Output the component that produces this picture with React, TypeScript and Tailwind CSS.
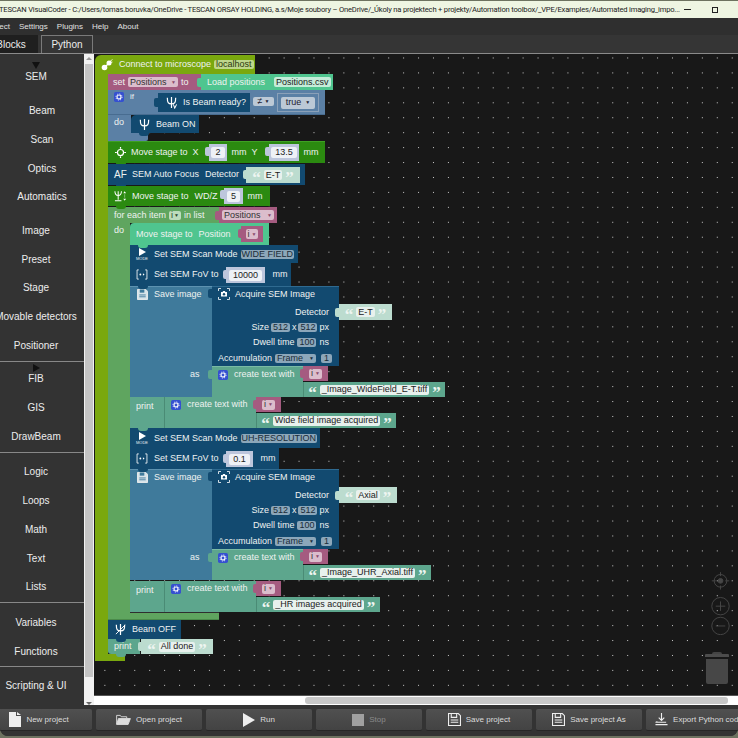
import React from "react";

const Blk = ({ className = "", children }: { className?: string; children?: React.ReactNode }) => (
  <div className={"absolute flex items-center whitespace-nowrap text-[9px] leading-none text-[#eef2f0] " + className}>{children}</div>
);

const Tab = ({ className = "" }: { className?: string }) => <div className={"absolute h-[9px] w-[4px] rounded-l-[2px] " + className} />;
const Notch = ({ className = "" }: { className?: string }) => <div className={"absolute h-[3px] w-[10px] rounded-b-[3px] " + className} />;

const Gear = () => (
  <svg viewBox="0 0 12 12" className="h-[10px] w-[10px] shrink-0">
    <rect width="12" height="12" rx="2" fill="#3550d0" />
    <circle cx="6" cy="6" r="2.4" fill="none" stroke="#fff" strokeWidth="1.3" />
    <circle cx="6" cy="6" r="3.7" fill="none" stroke="#fff" strokeWidth="1" strokeDasharray="1.4 1.5" />
  </svg>
);
const Floppy = ({ className = "h-[11px] w-[11px]", solid = true }: { className?: string; solid?: boolean }) => (
  <svg viewBox="0 0 12 12" className={className + " shrink-0"}>
    <path d="M.5 .5h9l2 2v9H.5z" fill={solid ? "#d8e4ea" : "none"} stroke="#eee" strokeWidth="1" />
    <path d="M3 .5h5v3.500H3z" fill={solid ? "#3f7a9b" : "none"} stroke={solid ? "none" : "#eee"} />
    <path d="M2.500 6.500h7M2.500 8.500h7" stroke={solid ? "#3f7a9b" : "#eee"} strokeWidth="1" />
  </svg>
);
const Camera = () => (
  <svg viewBox="0 0 12 12" className="h-[12px] w-[12px] shrink-0" fill="none" stroke="#fff" strokeWidth="0.8">
    <path d="M.5 3V.5H3M9 .5h2.5V3M.5 9v2.5H3M9 11.5h2.500V9" />
    <path d="M3 4h1.500l.7-1h1.600l.7 1H9v4.500H3z" fill="#fff" stroke="none" />
    <circle cx="6" cy="6.200" r="1.200" fill="#124a70" stroke="none" />
  </svg>
);
const ModeIcon = () => (
  <div className="flex w-[12px] shrink-0 flex-col items-center">
    <svg viewBox="0 0 8 8" className="h-[8px] w-[8px]"><path d="M1 0l7 4-7 4z" fill="#fff" /></svg>
    <span className="text-[4px] leading-[5px]">MODE</span>
  </div>
);
const FovIcon = () => (
  <svg viewBox="0 0 12 12" className="h-[11px] w-[12px] shrink-0" fill="none" stroke="#fff" strokeWidth="0.9">
    <path d="M2.500 1H.6v10h1.900M9.500 1h1.900v10H9.500" />
    <circle cx="4.200" cy="6" r="1" fill="#fff" stroke="none" />
    <path d="M7 4.700L8.800 6 7 7.300z" fill="#fff" stroke="none" />
  </svg>
);
const Psi = ({ mark }: { mark?: "off" | "ready" }) => (
  <svg viewBox="0 0 14 14" className="h-[13px] w-[13px] shrink-0" fill="none" stroke="#fff" strokeWidth="1.300">
    <path d="M2.500 2c0 5 1 6.500 4.500 6.500S11.500 7 11.500 2M7 1v12" />
    {mark === "off" && <path d="M2 12L12 2" strokeWidth="1" />}
    {mark === "ready" && <path d="M9 9l1.500 4 2-4" strokeWidth="1.100" />}
  </svg>
);
const WdIcon = () => (
  <svg viewBox="0 0 14 12" className="h-[12px] w-[13px] shrink-0" fill="none" stroke="#fff">
    <path d="M1 1c0 3.500 1 4.500 3.500 4.500S8 4.500 8 1M4.500 1v9M1 11h7" strokeWidth="1.100" />
    <path d="M11.500 1l-1.500 2h3zM11.500 11L10 9h3z" fill="#fff" stroke="none" />
    <path d="M11.500 4.500v1M11.500 6.500v1" strokeWidth="0.8" />
  </svg>
);

const Pill = ({ className = "bg-[#8ca7ba] text-[#1b2c38]", children }: { className?: string; children: React.ReactNode }) => (
  <span className={"inline-flex h-[9px] items-center rounded-[2px] px-[2px] text-[9px] leading-none " + className}>{children}</span>
);

const Num = ({ className, v }: { className: string; v: string }) => (
  <Blk className={"justify-center bg-[#bdc6dc] " + className}>
    <span className="flex h-[11px] items-center rounded-[2px] bg-[#eef1f6] px-[4px] text-[#222]">{v}</span>
  </Blk>
);

const Str = ({ className, v }: { className: string; v: string }) => (
  <div className={"absolute flex items-center justify-center gap-[3px] whitespace-nowrap text-[9px] leading-none " + className}>
    <span className="mt-[6px] font-['Liberation_Serif',serif] text-[17px] font-bold leading-[10px] text-[#eef5f1]">“</span>
    <span className="flex h-[10px] items-center rounded-[2px] bg-[#e8f1ed] px-[2px] text-[#222]">{v}</span>
    <span className="mt-[6px] font-['Liberation_Serif',serif] text-[17px] font-bold leading-[10px] text-[#eef5f1]">”</span>
  </div>
);

const VarI = ({ className }: { className: string }) => (
  <Blk className={"justify-center bg-[#a55b80] " + className}>
    <Tab className="left-[-3px] top-[3px] bg-[#a55b80]" />
    <span className="flex h-[10px] items-center gap-[2px] rounded-[2px] bg-[#dbbdcc] px-[2px] text-[#333]">i <span className="text-[5px] text-[#8a4a6a]">▼</span></span>
  </Blk>
);

const SaveGroup = ({ className, detector, detW, file, fileW }: { className: string; detector: string; detW: string; file: string; fileW: string }) => (
  <div className={"absolute " + className}>
    <Blk className="left-0 top-0 h-[111px] w-[82px] items-start border-t border-[#5d92b0] bg-[#3f7a9b] pl-[7px] pt-[2px]">
      <Floppy />
      <span className="ml-[6px] mt-[1px]">Save image</span>
    </Blk>
    <Blk className="left-[82px] top-0 h-[80px] w-[127px] items-start border-t border-[#2f6a90] bg-[#124a70]">
      <div className="ml-[6px] mt-[1px] flex items-center gap-[5px]"><Camera /><span>Acquire SEM Image</span></div>
    </Blk>
    <Tab className="left-[78px] top-[3px] bg-[#124a70]" />
    <Notch className="left-[8px] top-0 bg-[#124a70]" />
    <Blk className="left-[82px] top-[20px] h-[12px] w-[117px] justify-end">Detector</Blk>
    <Blk className="left-[82px] top-[36px] h-[11px] w-[117px] justify-end gap-[2px]">Size <Pill>512</Pill> x <Pill>512</Pill> px</Blk>
    <Blk className="left-[82px] top-[51px] h-[11px] w-[117px] justify-end gap-[3px]">Dwell time <Pill>100</Pill> ns</Blk>
    <Blk className="left-[88px] top-[67px] h-[11px] gap-[3px]">Accumulation <Pill className="w-[41px] justify-between bg-[#8ca7ba] text-[#1b2c38]">Frame <span className="text-[5px]">▼</span></Pill><Pill className="ml-[2px] bg-[#8ca7ba] px-[3px] text-[#1b2c38]">1</Pill></Blk>

    <Tab className="left-[205px] top-[22px] bg-[#bcdccf]" />
    <Str className={"left-[209px] top-[18px] h-[16px] bg-[#bcdccf] " + detW} v={detector} />

    <Blk className="left-[82px] top-[80px] h-[31px] w-[91px] items-start border-t border-[#7abba5] bg-[#5da68d] pl-[6px] pt-[3px]">
      <Gear />
      <span className="ml-[6px]">create text with</span>
    </Blk>
    <Blk className="left-[60px] top-[83px] h-[10px] w-[10px]">as</Blk>
    <Tab className="left-[78px] top-[84px] bg-[#5da68d]" />
    <VarI className="left-[173px] top-[80px] h-[15px] w-[25px]" />
    <Str className={"left-[173px] top-[96px] h-[15px] border-l border-[#4a8b75] bg-[#5da68d] " + fileW} v={file} />
  </div>
);

const PrintGroup = ({ className, text, w }: { className: string; text: string; w: string }) => (
  <div className={"absolute " + className}>
    <Blk className="left-0 top-0 h-[31px] w-[35px] items-start border-r border-[#4a8b75] bg-[#5da68d] pl-[6px] pt-[5px]">print</Blk>
    <Blk className="left-[35px] top-0 h-[31px] w-[91px] items-start bg-[#5da68d] pl-[6px] pt-[3px]">
      <Gear />
      <span className="ml-[6px]">create text with</span>
    </Blk>
    <VarI className="left-[126px] top-0 h-[15px] w-[25px]" />
    <Str className={"left-[126px] top-[16px] h-[15px] border-l border-[#4a8b75] bg-[#5da68d] " + w} v={text} />
  </div>
);

const Blocks = () => (
  <div className="absolute left-[-94px] top-[-54px] h-[738px] w-[738px]">
    {/* Connect hat */}
    <div className="absolute left-[95px] top-[72px] h-[589px] w-[13px] bg-[#7aa80e]" />
    <div className="absolute left-[95px] top-[654px] h-[7px] w-[30px] bg-[#7aa80e]" />
    <Blk className="left-[95px] top-[55px] h-[19px] w-[160px] rounded-tl-[6px] bg-[#7aa80e] pl-[6px]">
      <svg viewBox="0 0 12 12" className="h-[12px] w-[12px] shrink-0"><circle cx="3.500" cy="8.500" r="2.800" fill="#fff" /><circle cx="8" cy="4" r="2.500" fill="#fff" /><path d="M3 9l7-7" stroke="#fff" strokeWidth="1.200" /><path d="M9.500 2l2-1.500M10 3.500l1.500-.5" stroke="#fff" strokeWidth="0.800" /></svg>
      <span className="ml-[6px]">Connect to microscope</span>
      <span className="ml-[3px] flex h-[9px] items-center rounded-[2px] bg-[#bfd68c] px-[2px] text-[#2c3a0c]">localhost</span>
    </Blk>

    {/* set Positions */}
    <Blk className="left-[108px] top-[74px] h-[16px] w-[93px] bg-[#a55b80] pl-[5px]">
      set
      <span className="ml-[3px] flex h-[10px] w-[50px] items-center justify-between rounded-[2px] bg-[#dbbdcc] px-[2px] text-[#333]">Positions <span className="text-[5px] text-[#8a4a6a]">▼</span></span>
      <span className="ml-[3px]">to</span>
    </Blk>
    <Tab className="left-[197px] top-[78px] bg-[#4fc58f]" />
    <Blk className="left-[201px] top-[74px] h-[16px] w-[132px] bg-[#4fc58f] pl-[6px]">
      Load positions
      <span className="ml-[9px] flex h-[10px] items-center rounded-[2px] bg-[#c5ecd9] px-[2px] text-[#222]">Positions.csv</span>
    </Blk>

    {/* if */}
    <Blk className="left-[108px] top-[90px] h-[25px] w-[217px] items-start border-b border-[#486c90] bg-[#5b80a5] pl-[6px] pt-[2px]">
      <Gear />
      <span className="ml-[6px] mt-[1px] text-[8px]">if</span>
    </Blk>
    <div className="absolute left-[108px] top-[115px] h-[26px] w-[23px] bg-[#5b80a5]" />
    <div className="absolute left-[108px] top-[133px] h-[8px] w-[40px] rounded-br-[2px] bg-[#5b80a5]" />
    <Blk className="left-[114px] top-[117px] h-[10px]">do</Blk>
    <Tab className="left-[154px] top-[98px] bg-[#124a70]" />
    <Blk className="left-[158px] top-[93px] h-[19px] w-[92px] bg-[#124a70] pl-[7px]">
      <Psi mark="ready" />
      <span className="ml-[5px]">Is Beam ready?</span>
    </Blk>
    <div className="absolute left-[253px] top-[97px] flex h-[9px] w-[21px] items-center justify-center gap-[2px] rounded-[2px] bg-[#bcc9d6] text-[9px] leading-none text-[#223]">≠ <span className="text-[5px]">▼</span></div>
    <div className="absolute left-[277px] top-[93px] flex h-[19px] w-[42px] items-center justify-center whitespace-nowrap border border-[#8aa0b8] bg-[#5b80a5]">
      <span className="flex h-[12px] w-[34px] items-center justify-center rounded-[2px] bg-[#bcc9d6] text-[9px] leading-none text-[#223]">true <span className="ml-[4px] text-[5px]">▼</span></span>
    </div>
    <Blk className="left-[131px] top-[115px] h-[18px] w-[68px] rounded-tl-[5px] bg-[#124a70] pl-[7px]">
      <Psi />
      <span className="ml-[5px]">Beam ON</span>
    </Blk>
    <Notch className="left-[139px] top-[133px] bg-[#124a70]" />

    {/* Move stage XY */}
    <Blk className="left-[108px] top-[141px] h-[22px] w-[217px] border-t border-[#3fa024] bg-[#2b8a10] pl-[7px]">
      <svg viewBox="0 0 12 12" className="h-[11px] w-[11px] shrink-0" fill="none" stroke="#fff" strokeWidth="1.300"><circle cx="6" cy="6" r="3.300" /><path d="M6 0v2M6 10v2M0 6h2M10 6h2" /></svg>
      <span className="ml-[5px]">Move stage to</span>
      <span className="ml-[5px]">X</span>
      <span className="ml-[33px]">mm</span>
      <span className="ml-[5px]">Y</span>
      <span className="ml-[46px]">mm</span>
    </Blk>
    <Tab className="left-[205px] top-[147px] bg-[#bdc6dc]" />
    <Num className="left-[209px] top-[144px] h-[17px] w-[18px]" v="2" />
    <Tab className="left-[265px] top-[147px] bg-[#bdc6dc]" />
    <Num className="left-[269px] top-[144px] h-[17px] w-[30px]" v="13.5" />
    <Notch className="left-[116px] top-[163px] bg-[#2b8a10]" />

    {/* AF */}
    <Blk className="left-[108px] top-[164px] h-[21px] w-[197px] bg-[#124a70] pl-[6px]">
      <span className="w-[13px] text-[10px]">AF</span>
      <span className="ml-[5px]">SEM Auto Focus</span>
      <span className="ml-[6px]">Detector</span>
    </Blk>
    <Tab className="left-[243px] top-[170px] bg-[#bcdccf]" />
    <Str className="left-[246px] top-[167px] h-[16px] w-[54px] bg-[#bcdccf]" v="E-T" />
    <Notch className="left-[116px] top-[185px] bg-[#124a70]" />

    {/* WD/Z */}
    <Blk className="left-[108px] top-[186px] h-[20px] w-[162px] bg-[#2b8a10] pl-[6px]">
      <WdIcon />
      <span className="ml-[5px]">Move stage to</span>
      <span className="ml-[6px]">WD/Z</span>
      <span className="ml-[30px]">mm</span>
    </Blk>
    <Tab className="left-[220px] top-[190px] bg-[#bdc6dc]" />
    <Num className="left-[224px] top-[188px] h-[16px] w-[19px]" v="5" />

    {/* for each */}
    <Blk className="left-[108px] top-[207px] h-[16px] w-[111px] bg-[#5fa55f] pl-[6px]">
      for each item
      <span className="mx-[3px] flex h-[9px] items-center gap-[1px] rounded-[2px] bg-[#bcdcbc] px-[2px] text-[#2b4a2b]">i <span className="text-[5px]">▼</span></span>
      in list
    </Blk>
    <Notch className="left-[116px] top-[206px] bg-[#2b8a10]" />
    <div className="absolute left-[108px] top-[223px] h-[397px] w-[22px] bg-[#5fa55f]" />
    <div className="absolute left-[108px] top-[613px] h-[7px] w-[111px] border-b border-[#4a8a4a] bg-[#5fa55f]" />
    <Blk className="left-[114px] top-[226px] h-[8px]">do</Blk>
    <Tab className="left-[215px] top-[211px] bg-[#a55b80]" />
    <Blk className="left-[219px] top-[207px] h-[16px] w-[58px] justify-center bg-[#a55b80]">
      <span className="flex h-[10px] w-[52px] items-center justify-between rounded-[2px] bg-[#dbbdcc] px-[2px] text-[#333]">Positions <span className="text-[5px] text-[#8a4a6a]">▼</span></span>
    </Blk>

    {/* Move stage to Position */}
    <Blk className="left-[130px] top-[223px] h-[22px] w-[139px] rounded-tl-[4px] bg-[#4fc58f] pl-[6px]">
      Move stage to
      <span className="ml-[6px]">Position</span>
    </Blk>
    <VarI className="left-[241px] top-[226px] h-[16px] w-[22px]" />

    {/* Wide field */}
    <Blk className="left-[130px] top-[245px] h-[18px] w-[168px] bg-[#124a70] pl-[6px]">
      <ModeIcon />
      <span className="ml-[6px]">Set SEM Scan Mode</span>
      <span className="ml-[3px] flex h-[9px] items-center rounded-[2px] bg-[#8ca7ba] px-[1px] text-[#1b2c38]">WIDE FIELD</span>
    </Blk>
    <Notch className="left-[138px] top-[245px] bg-[#4fc58f]" />
    <Blk className="left-[130px] top-[263px] h-[23px] w-[161px] bg-[#124a70] pl-[6px]">
      <FovIcon />
      <span className="ml-[6px]">Set SEM FoV to</span>
      <span className="ml-[54px]">mm</span>
    </Blk>
    <Tab className="left-[223px] top-[270px] bg-[#bdc6dc]" />
    <Num className="left-[226px] top-[267px] h-[16px] w-[39px]" v="10000" />

    <SaveGroup className="left-[130px] top-[286px]" detector="E-T" detW="w-[53px]" file="_Image_WideField_E-T.tiff" fileW="w-[142px]" />
    <PrintGroup className="left-[130px] top-[397px]" text="Wide field image acquired" w="w-[140px]" />

    {/* UH */}
    <Blk className="left-[130px] top-[428px] h-[20px] w-[190px] bg-[#124a70] pl-[6px]">
      <ModeIcon />
      <span className="ml-[6px]">Set SEM Scan Mode</span>
      <span className="ml-[3px] flex h-[9px] items-center rounded-[2px] bg-[#8ca7ba] px-[1px] text-[#1b2c38]">UH-RESOLUTION</span>
    </Blk>
    <Notch className="left-[138px] top-[428px] bg-[#5da68d]" />
    <Blk className="left-[130px] top-[448px] h-[21px] w-[149px] bg-[#124a70] pl-[6px]">
      <FovIcon />
      <span className="ml-[6px]">Set SEM FoV to</span>
      <span className="ml-[42px]">mm</span>
    </Blk>
    <Tab className="left-[223px] top-[454px] bg-[#bdc6dc]" />
    <Num className="left-[226px] top-[451px] h-[16px] w-[27px]" v="0.1" />

    <SaveGroup className="left-[130px] top-[469px]" detector="Axial" detW="w-[58px]" file="_Image_UHR_Axial.tiff" fileW="w-[128px]" />
    <PrintGroup className="left-[130px] top-[581px]" text="_HR images acquired" w="w-[124px]" />
    <div className="absolute left-[130px] top-[612px] h-px w-[89px] bg-[#2f2f2f]" />

    {/* Beam OFF */}
    <Blk className="left-[108px] top-[620px] h-[19px] w-[73px] bg-[#124a70] pl-[6px]">
      <span className="flex w-[13px]"><Psi mark="off" /></span>
      <span className="ml-[5px]">Beam OFF</span>
    </Blk>

    {/* print */}
    <Blk className="left-[108px] top-[639px] h-[15px] w-[32px] rounded-bl-[3px] bg-[#5da68d] pl-[6px]">print</Blk>
    <Notch className="left-[116px] top-[639px] bg-[#124a70]" />
    <Notch className="left-[116px] top-[654px] bg-[#5da68d]" />
    <Tab className="left-[138px] top-[642px] bg-[#bcdccf]" />
    <Str className="left-[141px] top-[639px] h-[15px] w-[72px] bg-[#bcdccf]" v="All done" />
  </div>
);

const ToolIcon = ({ name }: { name: string }) => {
  if (name === "new")
    return <svg viewBox="0 0 12 15" className="h-[15px] w-[12px]"><path d="M0 0h7v4h5v11H0zM8 0l4 3H8z" fill="#eee" /></svg>;
  if (name === "open")
    return <svg viewBox="0 0 16 12" className="h-[11px] w-[15px]" fill="none" stroke="#ddd"><path d="M.5 11V1.500h4l1 1.500h6v1.500" /><path d="M2.500 5h13l-2.500 6.500H.5z" fill="#ddd" /></svg>;
  if (name === "run")
    return <svg viewBox="0 0 12 14" className="h-[14px] w-[12px]"><path d="M0 0l12 7-12 7z" fill="#eee" /></svg>;
  if (name === "stop") return <div className="h-[12px] w-[12px] bg-[#a0a0a0]" />;
  if (name === "save") return <Floppy className="h-[13px] w-[13px]" solid={false} />;
  return <svg viewBox="0 0 14 14" className="h-[13px] w-[13px]" fill="none" stroke="#eee" strokeWidth="1.200"><path d="M7 0v7M4 5l3 3 3-3" /><path d="M2 9v1H0.500M2 10h10M0.500 12.500h13" /></svg>;
};

const Btn = ({ icon, label, w = "w-[106px]", gap = "gap-[5px]", dim = false }: { icon: string; label: string; w?: string; gap?: string; dim?: boolean }) => (
  <div className={"flex h-[22px] shrink-0 items-center justify-center rounded-[2px] border-b border-[#262626] bg-gradient-to-b from-[#505050] to-[#434343] text-[8px] " + w + " " + gap + " " + (dim ? "text-[#8a8a8a]" : "text-[#dcdcdc]")}>
    <ToolIcon name={icon} />
    <span>{label}</span>
  </div>
);

const Item = ({ t, indent = false, mt = "" }: { t: string; indent?: boolean; mt?: string }) => (
  <div className={"flex h-[28.7px] shrink-0 items-center justify-center whitespace-nowrap text-[10px] text-[#ededed] " + (indent ? "pl-[12px] " : "") + mt}>{t}</div>
);
const Rule = ({ mb }: { mb: string }) => <div className={"ml-[7px] mt-[1px] h-px w-[86px] shrink-0 bg-[#888] " + mb} />;

export default function App() {
  return (
    <div className="h-[738px] w-[738px] overflow-hidden bg-[#6d7260] pt-px font-['Liberation_Sans',sans-serif]">
      <div className="flex h-[735px] w-[738px] flex-col overflow-hidden rounded-b-[8px] bg-[#333]">
        {/* title bar */}
        <div className="flex h-[17px] shrink-0 items-center overflow-hidden bg-[#eef5e2] font-['Roboto',sans-serif] text-[7.6px] tracking-[-0.2px] text-[#222]">
          <span className="-ml-[1px] w-[682px] shrink-0 overflow-hidden whitespace-nowrap">TESCAN VisualCoder - C:/Users/tomas.boruvka/OneDrive - TESCAN ORSAY HOLDING, a.s/Moje soubory – OneDrive/_Úkoly na projektech + projekty/Automation toolbox/_VPE/Examples/Automated imaging_impo...</span>
          <div className="ml-[3px] h-px w-[7px] bg-[#222]" />
          <div className="ml-[21px] h-[6px] w-[6px] border border-[#222]" />
        </div>
        {/* menu */}
        <div className="flex h-[17px] shrink-0 items-center gap-[9px] overflow-hidden bg-[#2f2f2f] text-[8px] text-[#e0e0e0]">
          <span className="-ml-[15px]">Project</span>
          <span>Settings</span>
          <span>Plugins</span>
          <span>Help</span>
          <span>About</span>
        </div>
        {/* tabs */}
        <div className="flex h-[19px] shrink-0 items-end gap-[3px] border-b border-[#8a8a8a] bg-[#353535] text-[10px] text-[#ededed]">
          <div className="-ml-[8px] flex h-[18px] w-[46px] items-center justify-center bg-[#1f1f1f] pr-[8px]">Blocks</div>
          <div className="flex h-[18px] w-[52px] items-center justify-center border border-b-0 border-[#7a7a7a]">Python</div>
        </div>
        {/* main */}
        <div className="flex min-h-0 flex-1">
          <div className="flex w-[84px] shrink-0 flex-col overflow-hidden bg-[#333] pt-[8.6px]">
            <div className="-ml-[7px] flex w-[86px] flex-col">
              <div className="relative">
                <div className="absolute left-[39px] top-[-1px] h-0 w-0 border-x-[4px] border-t-[7px] border-x-transparent border-t-[#111]" />
                <Item t="SEM" />
              </div>
              <Item t="Beam" indent mt="mt-[5.300px]" />
              <Item t="Scan" indent />
              <Item t="Optics" indent />
              <Item t="Automatics" indent />
              <Item t="Image" mt="mt-[4.800px]" />
              <Item t="Preset" />
              <Item t="Stage" />
              <Item t="Movable detectors" />
              <Item t="Positioner" />
              <Rule mb="mb-[3px]" />
              <div className="relative">
                <div className="absolute left-[40px] top-[-1px] h-0 w-0 border-y-[4px] border-l-[7px] border-y-transparent border-l-[#111]" />
                <Item t="FIB" />
              </div>
              <Item t="GIS" />
              <Item t="DrawBeam" />
              <Rule mb="mb-[5px]" />
              <Item t="Logic" />
              <Item t="Loops" />
              <Item t="Math" />
              <Item t="Text" />
              <Item t="Lists" />
              <Rule mb="mb-[5px]" />
              <Item t="Variables" />
              <Item t="Functions" />
              <Rule mb="mb-[4px]" />
              <Item t="Scripting &amp; UI" />
            </div>
          </div>
          {/* vertical scrollbar */}
          <div className="flex w-[10px] shrink-0 flex-col items-center bg-[#f1f1f1]">
            <span className="mt-[3px] h-0 w-0 border-x-[3px] border-b-[3px] border-x-transparent border-b-[#999]" />
            <div className="mt-[4px] h-[614px] w-[8px] bg-[#c4c4c4]" />
            <span className="mt-[25px] h-0 w-0 border-x-[3px] border-t-[3px] border-x-transparent border-t-[#666]" />
          </div>
          {/* canvas */}
          <div className="flex min-w-0 flex-1 flex-col">
            <div className="relative min-h-0 flex-1 overflow-hidden bg-[#181818] bg-[radial-gradient(circle,#c8c8c8_0.6px,transparent_1px)] bg-[size:14.95px_14.95px] bg-[position:3.4px_-3.5px]">
              <Blocks />
              <svg viewBox="0 0 24 80" className="absolute right-[8px] top-[517px] h-[64px] w-[19px]" fill="none" stroke="#474747" strokeWidth="1.200">
                <circle cx="12" cy="12" r="8" /><circle cx="12" cy="12" r="3" fill="#474747" /><path d="M12 1v5M12 18v5M1 12h5M18 12h5" />
                <circle cx="12" cy="44" r="11" /><path d="M6 44h12M12 38v12" />
                <circle cx="12" cy="69" r="11" /><path d="M6 69h12" />
              </svg>
              <div className="absolute right-[9px] top-[598px] flex w-[24px] flex-col items-center">
                <div className="h-[2px] w-[10px] rounded-t-[2px] bg-[#444]" />
                <div className="h-[3px] w-[24px] rounded-t-[1px] bg-[#4c4c4c]" />
                <div className="mt-[2px] h-[25px] w-[22px] rounded-b-[2px] bg-[#474747]" />
              </div>
            </div>
            <div className="flex h-[10px] shrink-0 items-center justify-end border-t border-[#555] bg-white pr-[10px]">
              <div className="h-[7px] w-[423px] rounded-[3px] bg-[#c8c8c8]" />
            </div>
          </div>
        </div>
        {/* toolbar */}
        <div className="flex h-[31px] shrink-0 items-start gap-[4px] overflow-hidden bg-[#333] pt-[4px]">
          <Btn icon="new" label="New project" w="-ml-[14px] w-[106px]" />
          <Btn icon="open" label="Open project" />
          <Btn icon="run" label="Run" />
          <Btn icon="stop" label="Stop" dim />
          <Btn icon="save" label="Save project" />
          <Btn icon="save" label="Save project As" />
          <Btn icon="export" label="Export Python code" />
        </div>
      </div>
    </div>
  );
}
